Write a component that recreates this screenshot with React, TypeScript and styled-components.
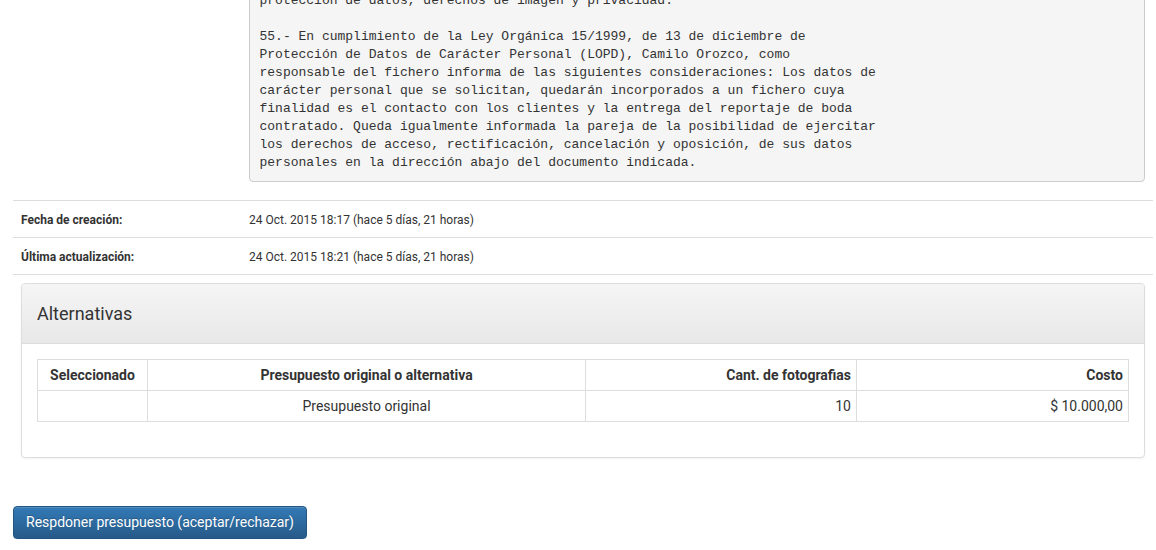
import React from "react";
import styled, { createGlobalStyle } from "styled-components";

const GlobalStyle = createGlobalStyle`
  html, body { margin: 0; padding: 0; background: #fff; }
  body {
    font-family: Roboto, "Helvetica Neue", Arial, sans-serif;
    font-size: 14px;
    line-height: 1.42857;
    color: #333;
    overflow: hidden;
  }
  * { box-sizing: border-box; }
`;

const Page = styled.div`
  margin-top: -27px;
  padding: 0 3px 0 13px;
`;

const InfoList = styled.div`
  display: flex;
  flex-direction: column;
`;

const InfoRow = styled.div<{ $first?: boolean }>`
  display: grid;
  grid-template-columns: 228px 1fr;
  border-top: ${(p) => (p.$first ? "none" : "1px solid #ddd")};
`;

const Label = styled.div`
  padding: 9px 8px 7px;
  font-size: 12px;
  line-height: 20px;
  font-weight: 700;
`;

const Value = styled.div`
  padding: 9px 8px 7px;
  font-size: 12px;
  line-height: 20px;
`;

const PreCell = styled.div`
  padding: 8px;
`;

const FullCell = styled.div`
  grid-column: 1 / -1;
  padding: 8px;
`;

const Pre = styled.pre`
  margin: 0 0 10px;
  padding: 9.5px;
  background: #f5f5f5;
  border: 1px solid #ccc;
  border-radius: 4px;
  font-family: "Liberation Mono", "Courier New", monospace;
  font-size: 13px;
  line-height: 18px;
  color: #333;
  white-space: pre-wrap;
`;

const Panel = styled.div`
  border: 1px solid #ddd;
  border-radius: 4px;
  background: #fff;
  box-shadow: 0 1px 2px rgba(0, 0, 0, 0.05);
  margin-bottom: 20px;
`;

const PanelHeading = styled.div`
  padding: 20px 15px;
  background-image: linear-gradient(to bottom, #f5f5f5 0, #e8e8e8 100%);
  border-bottom: 1px solid #ddd;
  border-radius: 3px 3px 0 0;
`;

const PanelTitle = styled.h3`
  margin: 0;
  font-size: 18px;
  line-height: 19px;
  font-weight: 400;
  color: #333;
`;

const PanelBody = styled.div`
  padding: 15px;
`;

const Table = styled.table`
  width: 100%;
  border-collapse: collapse;
  border: 1px solid #ddd;
  margin-bottom: 20px;
  table-layout: fixed;
`;

const Th = styled.th<{ $align: string }>`
  border: 1px solid #ddd;
  padding: 5px;
  font-size: 14px;
  line-height: 20px;
  font-weight: 700;
  text-align: ${(p) => p.$align};
`;

const Td = styled.td<{ $align: string }>`
  border: 1px solid #ddd;
  padding: 5px;
  font-size: 14px;
  line-height: 20px;
  text-align: ${(p) => p.$align};
`;

const Actions = styled.div`
  padding-top: 20px;
`;

const Button = styled.button`
  display: inline-block;
  padding: 6px 12px;
  font-family: Roboto, "Helvetica Neue", Arial, sans-serif;
  font-size: 14px;
  line-height: 19px;
  color: #fff;
  background-image: linear-gradient(to bottom, #337ab7 0, #265a88 100%);
  border: 1px solid #245580;
  border-radius: 4px;
  text-shadow: 0 -1px 0 rgba(0, 0, 0, 0.2);
  box-shadow: inset 0 1px 0 rgba(255, 255, 255, 0.15), 0 1px 1px rgba(0, 0, 0, 0.075);
  cursor: pointer;
`;

const legalText = `protección de datos, derechos de imagen y privacidad.

55.- En cumplimiento de la Ley Orgánica 15/1999, de 13 de diciembre de
Protección de Datos de Carácter Personal (LOPD), Camilo Orozco, como
responsable del fichero informa de las siguientes consideraciones: Los datos de
carácter personal que se solicitan, quedarán incorporados a un fichero cuya
finalidad es el contacto con los clientes y la entrega del reportaje de boda
contratado. Queda igualmente informada la pareja de la posibilidad de ejercitar
los derechos de acceso, rectificación, cancelación y oposición, de sus datos
personales en la dirección abajo del documento indicada.`;

const columns = [
  { key: "sel", title: "Seleccionado", width: 110, head: "center", body: "center" },
  { key: "name", title: "Presupuesto original o alternativa", width: 438, head: "center", body: "center" },
  { key: "qty", title: "Cant. de fotografias", width: 271, head: "right", body: "right" },
  { key: "cost", title: "Costo", width: 272, head: "right", body: "right" },
];

const rows = [{ sel: "", name: "Presupuesto original", qty: "10", cost: "$ 10.000,00" }];

export default function App() {
  return (
    <>
      <GlobalStyle />
      <Page>
        <InfoList>
          <InfoRow $first>
            <PreCell />
            <PreCell>
              <Pre>{legalText}</Pre>
            </PreCell>
          </InfoRow>
          <InfoRow>
            <Label>Fecha de creación:</Label>
            <Value>24 Oct. 2015 18:17 (hace 5 días, 21 horas)</Value>
          </InfoRow>
          <InfoRow>
            <Label>Última actualización:</Label>
            <Value>24 Oct. 2015 18:21 (hace 5 días, 21 horas)</Value>
          </InfoRow>
          <InfoRow>
            <FullCell>
              <Panel>
                <PanelHeading>
                  <PanelTitle>Alternativas</PanelTitle>
                </PanelHeading>
                <PanelBody>
                  <Table>
                    <colgroup>
                      {columns.map((c) => (
                        <col key={c.key} style={{ width: c.width }} />
                      ))}
                    </colgroup>
                    <thead>
                      <tr>
                        {columns.map((c) => (
                          <Th key={c.key} $align={c.head}>
                            {c.title}
                          </Th>
                        ))}
                      </tr>
                    </thead>
                    <tbody>
                      {rows.map((r, i) => (
                        <tr key={i}>
                          {columns.map((c) => (
                            <Td key={c.key} $align={c.body}>
                              {(r as Record<string, string>)[c.key]}
                            </Td>
                          ))}
                        </tr>
                      ))}
                    </tbody>
                  </Table>
                </PanelBody>
              </Panel>
            </FullCell>
          </InfoRow>
        </InfoList>
        <Actions>
          <Button>Respdoner presupuesto (aceptar/rechazar)</Button>
        </Actions>
      </Page>
    </>
  );
}
